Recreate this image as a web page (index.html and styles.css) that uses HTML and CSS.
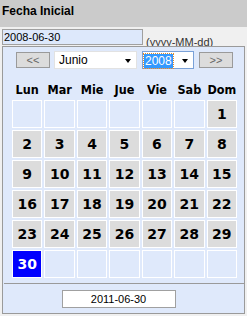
FILE: index.html
```html
<!DOCTYPE html>
<html lang="es">

<head>
  <meta charset="UTF-8">
  <title>Fecha Inicial</title>
  <link rel="stylesheet" href="styles.css">
</head>

<body>
  <div class="field">
    <div class="field-title">Fecha Inicial</div>
    <div class="field-row">
      <div class="date-input">2008-06-30</div>
      <span class="hint">(yyyy-MM-dd)</span>
    </div>

    <!-- calendario desplegable -->
    <div class="calendar">
      <div class="cal-nav">
        <button class="nav-btn prev">&lt;&lt;</button>
        <div class="select month"><span>Junio</span><i class="arrow"></i></div>
        <div class="select year"><span class="sel">2008</span><i class="arrow"></i></div>
        <button class="nav-btn next">&gt;&gt;</button>
      </div>

      <div class="weekdays">
        <div>Lun</div><div>Mar</div><div>Mie</div><div>Jue</div><div>Vie</div><div>Sab</div><div>Dom</div>
      </div>

      <div class="days">
        <div class="day empty"></div><div class="day empty"></div><div class="day empty"></div><div class="day empty"></div><div class="day empty"></div><div class="day empty"></div><div class="day">1</div>
        <div class="day">2</div><div class="day">3</div><div class="day">4</div><div class="day">5</div><div class="day">6</div><div class="day">7</div><div class="day">8</div>
        <div class="day">9</div><div class="day">10</div><div class="day">11</div><div class="day">12</div><div class="day">13</div><div class="day">14</div><div class="day">15</div>
        <div class="day">16</div><div class="day">17</div><div class="day">18</div><div class="day">19</div><div class="day">20</div><div class="day">21</div><div class="day">22</div>
        <div class="day">23</div><div class="day">24</div><div class="day">25</div><div class="day">26</div><div class="day">27</div><div class="day">28</div><div class="day">29</div>
        <div class="day selected">30</div><div class="day empty"></div><div class="day empty"></div><div class="day empty"></div><div class="day empty"></div><div class="day empty"></div><div class="day empty"></div>
      </div>

      <div class="cal-sep"></div>

      <div class="cal-foot">
        <div class="today">2011-06-30</div>
      </div>
    </div>
  </div>
</body>

</html>
```

FILE: styles.css
```css
* {
  box-sizing: border-box;
}

body {
  margin: 0;
  font-family: "Liberation Sans", Arial, sans-serif;
}

.field {
  position: relative;
  width: 247px;
  height: 316px;
  background-color: #f0f0f0;
}

.field-title {
  height: 27px;
  padding: 4px 0 0 2px;
  background-color: #cbcbcb;
  font-size: 12px;
  font-weight: bold;
  line-height: 14px;
  color: #000;
}

.field-row {
  display: flex;
  align-items: flex-start;
  padding: 2px 0 0 2px;
}

.date-input {
  width: 141px;
  height: 16px;
  padding-left: 1px;
  border: 1px solid #a0a0a0;
  background-color: #dde8fb;
  font-size: 11px;
  line-height: 14px;
}

.hint {
  margin: 6px 0 0 3px;
  font-size: 11px;
  line-height: 14px;
  color: #333;
}

/* popup */
.calendar {
  position: absolute;
  top: 46px;
  left: 2px;
  width: 243px;
  height: 268px;
  padding-top: 4px;
  border: 1px solid #9a9a9a;
  background-color: #dfe9fb;
}

.cal-nav {
  display: flex;
  align-items: center;
  height: 18px;
  padding-left: 13px;
}

.nav-btn {
  width: 34px;
  height: 16px;
  padding: 0;
  border: 1px solid #9a9a9a;
  background-color: #dcdcdc;
  font-family: "Liberation Sans", Arial, sans-serif;
  font-size: 11px;
  line-height: 14px;
  color: #666;
}

.select {
  position: relative;
  height: 18px;
  margin-left: 4px;
  border: 1px solid #e2e2e2;
  background-color: #fff;
  font-size: 12px;
  line-height: 16px;
}

.select.month {
  width: 83px;
  padding-left: 4px;
}

.select.year {
  width: 52px;
  margin-left: 5px;
  margin-right: 5px;
  padding: 1px 0 0 1px;
  border-color: #7aa1d8;
}

.select .sel {
  display: inline-block;
  padding: 0 1px;
  line-height: 14px;
  color: #fff;
  background-color: #3399ff;
  outline: 1px dotted #e08a2c;
}

.arrow {
  position: absolute;
  top: 7px;
  right: 5px;
  width: 0;
  height: 0;
  border-left: 3.5px solid transparent;
  border-right: 3.5px solid transparent;
  border-top: 4px solid #000;
}

.weekdays {
  display: grid;
  grid-template-columns: repeat(7, 1fr);
  column-gap: 2px;
  width: 225px;
  margin: 12px 0 0 9px;
  height: 19px;
  font-family: "DejaVu Sans Condensed", "DejaVu Sans", sans-serif;
  font-weight: bold;
  font-size: 12.5px;
  line-height: 18px;
  text-align: center;
  color: #000;
}

.days {
  display: grid;
  grid-template-columns: repeat(7, 1fr);
  grid-auto-rows: 28px;
  gap: 2px;
  width: 225px;
  margin-left: 9px;
}

.day {
  display: flex;
  align-items: center;
  justify-content: center;
  border: 1px solid #fff;
  background-color: #dcdcdc;
  font-family: "DejaVu Sans", sans-serif;
  font-weight: bold;
  font-size: 14px;
  color: #000;
}

.day.empty {
  background-color: #dfe9fb;
}

.day.selected {
  background-color: #0000ff;
  color: #fff;
}

.cal-sep {
  height: 1px;
  margin: 5px 0 0 1px;
  background-color: #9a9a9a;
}

.cal-foot {
  padding-top: 6px;
  display: flex;
  justify-content: center;
}

.today {
  width: 114px;
  height: 18px;
  margin-left: -10px;
  border: 1px solid #a0a0a0;
  background-color: #fff;
  font-size: 11px;
  line-height: 16px;
  text-align: center;
  color: #000;
}
```
